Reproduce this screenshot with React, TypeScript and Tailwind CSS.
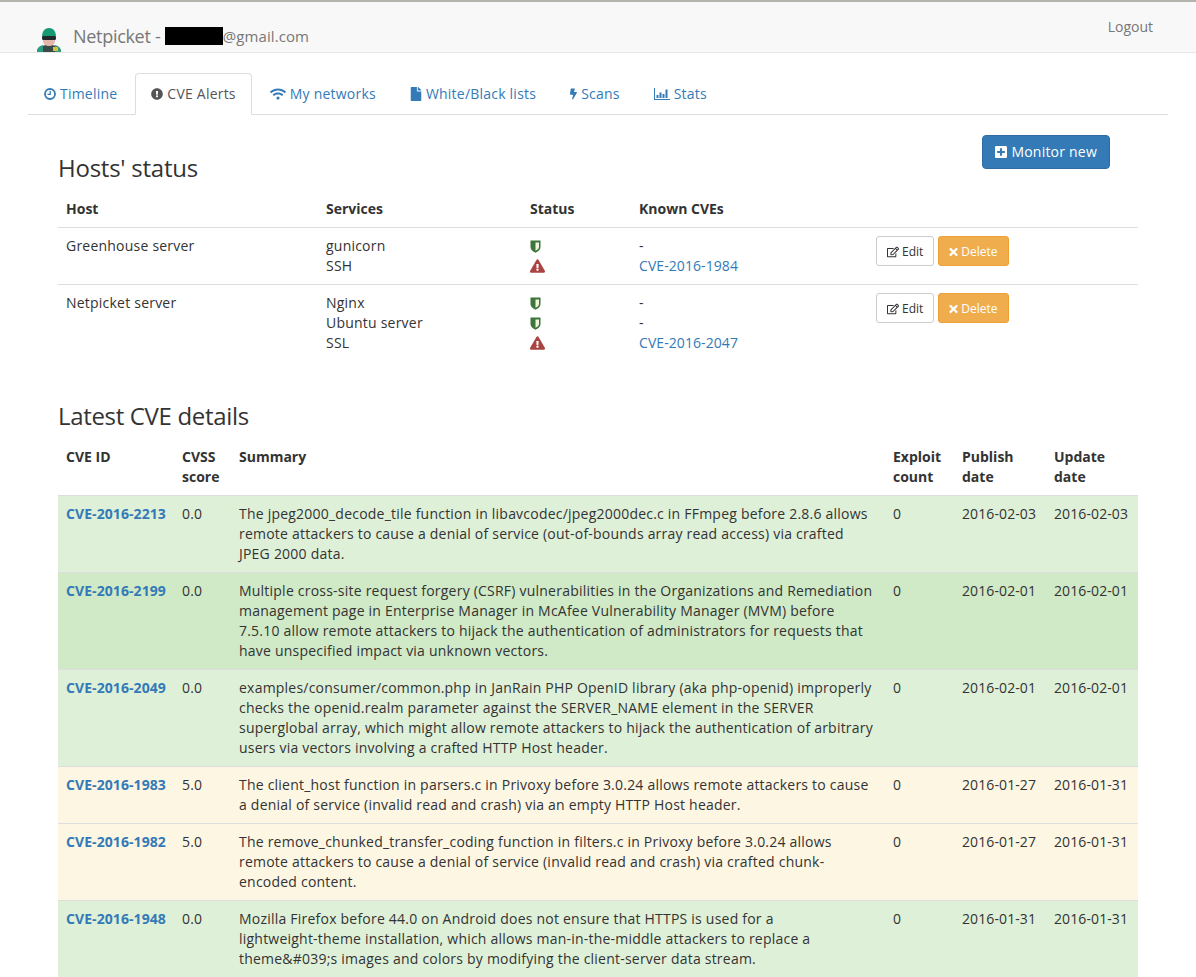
import type { ReactNode } from 'react';
import { FaExclamationCircle, FaWifi, FaFile, FaBolt, FaPlusSquare, FaRegEdit, FaTimes, FaExclamationTriangle } from 'react-icons/fa';

type Service = { name: string; ok: boolean; cve: string };
type Host = { name: string; services: Service[] };
type Cve = { id: string; score: string; date: string; updated: string; bg: string; summary: ReactNode };

const hosts: Host[] = [
  {
    name: 'Greenhouse server',
    services: [
      { name: 'gunicorn', ok: true, cve: '-' },
      { name: 'SSH', ok: false, cve: 'CVE-2016-1984' },
    ],
  },
  {
    name: 'Netpicket server',
    services: [
      { name: 'Nginx', ok: true, cve: '-' },
      { name: 'Ubuntu server', ok: true, cve: '-' },
      { name: 'SSL', ok: false, cve: 'CVE-2016-2047' },
    ],
  },
];

const cves: Cve[] = [
  {
    id: 'CVE-2016-2213', score: '0.0', date: '2016-02-03', updated: '2016-02-03', bg: 'bg-[#dff0d8]',
    summary: (
      <>
        The jpeg2000_decode_tile function in libavcodec/jpeg2000dec.c in FFmpeg before 2.8.6 allows remote attackers to cause a denial of service (out-of-bounds array read access) via crafted
        <br />
        JPEG 2000 data.
      </>
    ),
  },
  {
    id: 'CVE-2016-2199', score: '0.0', date: '2016-02-01', updated: '2016-02-01', bg: 'bg-[#d0e9c6]',
    summary: 'Multiple cross-site request forgery (CSRF) vulnerabilities in the Organizations and Remediation management page in Enterprise Manager in McAfee Vulnerability Manager (MVM) before 7.5.10 allow remote attackers to hijack the authentication of administrators for requests that have unspecified impact via unknown vectors.',
  },
  {
    id: 'CVE-2016-2049', score: '0.0', date: '2016-02-01', updated: '2016-02-01', bg: 'bg-[#dff0d8]',
    summary: 'examples/consumer/common.php in JanRain PHP OpenID library (aka php-openid) improperly checks the openid.realm parameter against the SERVER_NAME element in the SERVER superglobal array, which might allow remote attackers to hijack the authentication of arbitrary users via vectors involving a crafted HTTP Host header.',
  },
  {
    id: 'CVE-2016-1983', score: '5.0', date: '2016-01-27', updated: '2016-01-31', bg: 'bg-[#fcf6e3]',
    summary: 'The client_host function in parsers.c in Privoxy before 3.0.24 allows remote attackers to cause a denial of service (invalid read and crash) via an empty HTTP Host header.',
  },
  {
    id: 'CVE-2016-1982', score: '5.0', date: '2016-01-27', updated: '2016-01-31', bg: 'bg-[#fcf6e3]',
    summary: 'The remove_chunked_transfer_coding function in filters.c in Privoxy before 3.0.24 allows remote attackers to cause a denial of service (invalid read and crash) via crafted chunk-encoded content.',
  },
  {
    id: 'CVE-2016-1948', score: '0.0', date: '2016-01-31', updated: '2016-01-31', bg: 'bg-[#dff0d8]',
    summary: (
      <>
        Mozilla Firefox before 44.0 on Android does not ensure that HTTPS is used for a
        <br />
        lightweight-theme installation, which allows man-in-the-middle attackers to replace a theme&amp;#039;s images and colors by modifying the client-server data stream.
      </>
    ),
  },
];

function ClockIcon() {
  return (
    <svg width="12" height="12" viewBox="0 0 12 12" fill="none" stroke="currentColor" className="shrink-0">
      <circle cx="6" cy="6" r="5" strokeWidth="1.800" />
      <path d="M6.200 3v3.400H3.500" strokeWidth="1.300" />
    </svg>
  );
}

function StatsIcon() {
  return (
    <svg width="16" height="14" viewBox="0 0 16 14" fill="currentColor" className="shrink-0">
      <path d="M0 1h1v11h15v1H0z" />
      <rect x="2.500" y="8" width="2" height="3" />
      <rect x="5.500" y="5.500" width="2" height="5.500" />
      <rect x="8.500" y="7" width="2" height="4" />
      <rect x="11.500" y="2.500" width="2" height="8.500" />
    </svg>
  );
}

const tabs = [
  { label: 'Timeline', icon: <ClockIcon /> },
  { label: 'CVE Alerts', icon: <FaExclamationCircle className="w-3 h-3" />, active: true },
  { label: 'My networks', icon: <FaWifi className="w-4 h-4" /> },
  { label: 'White/Black lists', icon: <FaFile className="w-3 h-[14px]" /> },
  { label: 'Scans', icon: <FaBolt className="w-[7px] h-[14px]" /> },
  { label: 'Stats', icon: <StatsIcon /> },
];

function Logo() {
  return (
    <svg width="26" height="25" viewBox="0 0 26 25" className="shrink-0">
      <path d="M1 25c0-5 4-7 12-7s12 2 12 7z" fill="#3a4a48" />
      <path d="M1 25c0-3 2-6 6-7v7zM25 25c0-3-2-6-6-7v7z" fill="#2a9d80" />
      <rect x="17" y="20" width="5" height="4" fill="#d8c23a" />
      <path d="M7 11h12v3c0 3-3 5-6 5s-6-2-6-5z" fill="#e3b5ac" />
      <path d="M6 10c0-6 3-9 7-9s7 3 7 9z" fill="#159a73" />
      <rect x="6" y="9" width="14" height="4" rx="1.500" fill="#23282b" />
    </svg>
  );
}

function ShieldIcon() {
  return (
    <svg width="11" height="13" viewBox="0 0 11 13" className="block">
      <path d="M.5.500h10v6.500c0 2.800-2.500 4.700-5 5.700-2.500-1-5-2.900-5-5.700z" fill="#3c763d" />
      <path d="M5.500 2.500H9v4.500c0 1.700-1.700 3-3.500 3.800z" fill="#f2f5de" />
    </svg>
  );
}

function HostRow({ host }: { host: Host }) {
  return (
    <tr className="border-t border-[#ddd] align-top">
      <td className="p-2">{host.name}</td>
      <td className="p-2">
        {host.services.map((s) => (
          <div key={s.name}>{s.name}</div>
        ))}
      </td>
      <td className="p-2">
        {host.services.map((s) => (
          <div key={s.name} className="h-5 flex items-center">
            {s.ok ? <ShieldIcon /> : <FaExclamationTriangle className="w-[15px] h-[14px] text-[#a94442]" />}
          </div>
        ))}
      </td>
      <td className="p-2 tracking-[0.08px]">
        {host.services.map((s) => (
          <div key={s.name}>
            {s.cve === '-' ? '-' : <a href="#" className="text-[#337ab7]">{s.cve}</a>}
          </div>
        ))}
      </td>
      <td className="p-2">
        <div className="flex gap-1 tracking-normal">
          <button className="flex items-center gap-[3px] h-[30px] pt-px px-[10px] text-xs border border-[#ccc] rounded-[3px] bg-white text-[#333]">
            <FaRegEdit className="w-3 h-3" />
            Edit
          </button>
          <button className="flex items-center gap-[3px] h-[30px] pt-px px-[10px] text-xs border border-[#eea236] rounded-[3px] bg-[#f0ad4e] text-white">
            <FaTimes className="w-[9px] h-3" />
            Delete
          </button>
        </div>
      </td>
    </tr>
  );
}

export default function App() {
  return (
    <div className="min-h-screen bg-white text-sm leading-5 tracking-[0.22px] text-[#333] font-['Open_Sans',sans-serif]">
      {/* Navbar */}
      <nav className="h-[53px] bg-[#f8f8f8] border-t-2 border-t-[#b4b4ae] border-b border-b-[#e7e7e7] flex justify-between pl-[36px] pr-[43px]">
        <div className="flex items-end gap-[11px]">
          <Logo />
          <div className="flex items-center text-[#777] pb-[6px] tracking-normal">
            <span className="text-lg leading-5 tracking-[-0.3px]">Netpicket -&nbsp;</span>
            <span className="w-[58px] h-[18px] bg-black" />
            <span className="text-[15px] leading-5 tracking-[0.08px]">@gmail.com</span>
          </div>
        </div>
        <a href="#" className="text-[#777] pt-[15px] tracking-normal">Logout</a>
      </nav>

      <div className="mx-[28px] pt-[20px]">
        {/* Tabs */}
        <ul className="flex h-[42px] border-b border-[#ddd]">
          {tabs.map((t) => (
            <li key={t.label} className="mr-[2px]">
              <a
                href="#"
                className={
                  t.active
                    ? 'flex items-center gap-[4px] h-[42px] px-[15px] bg-white border border-[#ddd] border-b-white rounded-t text-[#555]'
                    : 'flex items-center gap-[4px] h-[42px] px-[15px] border border-transparent text-[#337ab7]'
                }
              >
                {t.icon}
                {t.label}
              </a>
            </li>
          ))}
        </ul>

        <div className="px-[30px]">
          <div className="flex justify-between items-start">
            <h3 className="text-2xl leading-[26px] mt-[40px] font-normal tracking-[-0.25px]">Hosts' status</h3>
            <button className="flex items-center gap-1 h-[34px] mt-[20px] mr-[28px] px-3 bg-[#337ab7] border border-[#2e6da4] rounded text-white">
              <FaPlusSquare className="w-3 h-[14px]" />
              Monitor new
            </button>
          </div>

          {/* Hosts table */}
          <table className="w-full table-fixed mt-[10px]">
            <thead className="tracking-normal">
              <tr className="text-left">
                <th className="p-2 font-bold w-[260px] border-b border-[#ddd]">Host</th>
                <th className="p-2 font-bold w-[204px] border-b border-[#ddd]">Services</th>
                <th className="p-2 font-bold w-[109px] border-b border-[#ddd]">Status</th>
                <th className="p-2 font-bold w-[237px] border-b border-[#ddd]">Known CVEs</th>
                <th className="p-2 border-b border-[#ddd]" />
              </tr>
            </thead>
            <tbody>
              {hosts.map((h) => (
                <HostRow key={h.name} host={h} />
              ))}
            </tbody>
          </table>

          <h3 className="text-2xl leading-[26px] mt-[42px] mb-[10px] font-normal tracking-[-0.33px]">Latest CVE details</h3>

          {/* CVE table */}
          <table className="w-full table-fixed">
            <thead className="tracking-normal">
              <tr className="text-left align-top">
                <th className="p-2 font-bold w-[116px]">CVE ID</th>
                <th className="p-2 font-bold w-[57px]">CVSS score</th>
                <th className="p-2 font-bold w-[654px]">Summary</th>
                <th className="p-2 font-bold w-[69px]">Exploit count</th>
                <th className="p-2 font-bold w-[92px]">Publish date</th>
                <th className="p-2 font-bold">Update date</th>
              </tr>
            </thead>
            <tbody>
              {cves.map((c) => (
                <tr key={c.id} className={`${c.bg} align-top border-t border-[#ddd]`}>
                  <td className="p-2 font-bold tracking-[0.08px]">
                    <a href="#" className="text-[#337ab7]">{c.id}</a>
                  </td>
                  <td className="p-2">{c.score}</td>
                  <td className="p-2">{c.summary}</td>
                  <td className="p-2">0</td>
                  <td className="p-2 tracking-[0.1px]">{c.date}</td>
                  <td className="p-2 tracking-[0.1px]">{c.updated}</td>
                </tr>
              ))}
            </tbody>
          </table>
        </div>
      </div>
    </div>
  );
}
